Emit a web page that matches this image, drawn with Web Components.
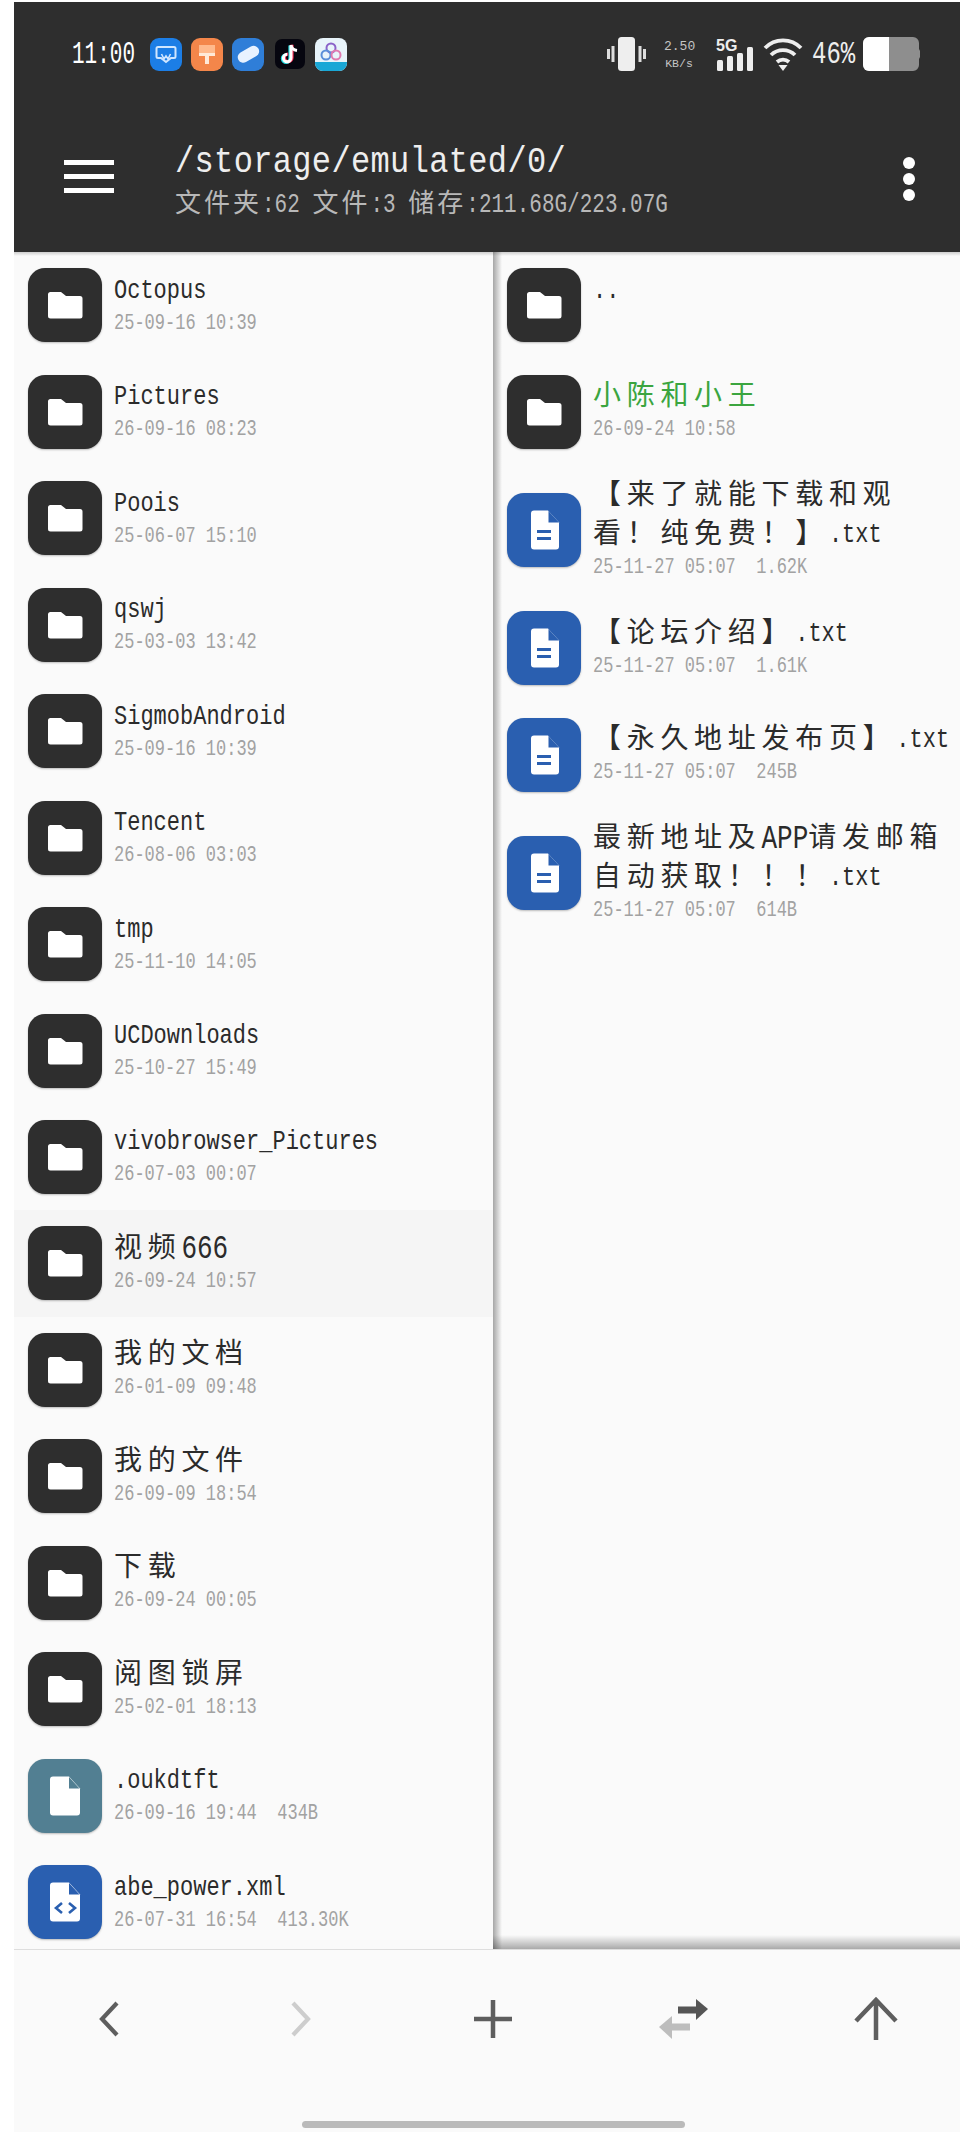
<!DOCTYPE html>
<html lang="zh">
<head>
<meta charset="utf-8">
<title>文件管理</title>
<style>
  html, body { margin: 0; padding: 0; background: #fff; }
  body { width: 960px; height: 2132px; overflow: hidden; }
</style>
</head>
<body>
<file-app></file-app>

<template id="folder-glyph">
  <svg viewBox="0 0 74 74" width="74" height="74"><path d="M20 26.5a2.5 2.5 0 0 1 2.500-2.500h10.500l5 4h14a2.500 2.500 0 0 1 2.500 2.500v17.500a2.500 2.500 0 0 1-2.500 2.500h-29.500a2.500 2.500 0 0 1-2.500-2.500z" fill="#fff"/></svg>
</template>

<script>
// Latin runs are stretched a bit (reference font is tall and narrow), CJK runs get a bigger size
function markText(text) {
  const safe = text.replace(/&/g, '&amp;').replace(/</g, '&lt;');
  const parts = safe.split(/([\u3000-\u303f\u3400-\u9fff\uff00-\uffef]+|\n)/);
  const hasCjk = parts.length > 1;
  return parts.map((part, i) => {
    if (!part) return '';
    if (part === '\n') return part;
    if (i % 2) return `<span class="cjk">${part}</span>`;
    // digits and capitals inside a CJK name come out larger in the reference
    const big = hasCjk && /^[A-Z0-9]{3,}$/.test(part);
    return `<span class="lat${big ? ' big' : ''}">${part}</span>`;
  }).join('');
}

const FILE_GLYPHS = {
  folder: document.getElementById('folder-glyph').innerHTML,
  doc: `<svg viewBox="0 0 74 74" width="74" height="74"><path d="M24 20.500a3 3 0 0 1 3-3h14l11 12v24a3 3 0 0 1-3 3h-22a3 3 0 0 1-3-3z" fill="#fff"/><path d="M41.500 18v11.500h10.500z" fill="#2a5fb0"/><path d="M30 38.500h14M30 45.500h14" stroke="#2a5fb0" stroke-width="3"/></svg>`,
  plain: `<svg viewBox="0 0 74 74" width="74" height="74"><path d="M22 20.500a3 3 0 0 1 3-3h16l11 12v24a3 3 0 0 1-3 3h-24a3 3 0 0 1-3-3z" fill="#fff"/><path d="M41 18v11.500h10.500z" fill="#527f92"/></svg>`,
  xml: `<svg viewBox="0 0 74 74" width="74" height="74"><path d="M22 20.500a3 3 0 0 1 3-3h16l11 12v24a3 3 0 0 1-3 3h-24a3 3 0 0 1-3-3z" fill="#fff"/><path d="M41 18v11.500h10.500z" fill="#2a5fb0"/><path d="M34 38l-6 5 6 5M41 38l6 5-6 5" fill="none" stroke="#2a5fb0" stroke-width="2.600"/></svg>`
};

const ICON_BG = { folder: '#2e2e2e', doc: '#2a5fb0', plain: '#527f92', xml: '#2a5fb0' };

class FileRow extends HTMLElement {
  connectedCallback() {
    const kind = this.getAttribute('kind') || 'folder';
    const name = this.getAttribute('name') || '';
    const meta = this.getAttribute('meta') || '';
    this.attachShadow({ mode: 'open' });
    this.shadowRoot.innerHTML = `
      <style>
        :host {
          display: flex;
          align-items: center;
          gap: 12px;
          box-sizing: border-box;
          min-height: 106.470px;
          padding: 13px 0 13px 14px;
        }
        :host([active]) { background: #f5f5f5; }
        .icon {
          flex: none;
          width: 74px;
          height: 74px;
          border-radius: 17px;
          box-shadow: 0 1px 2px rgba(0, 0, 0, .25);
          background: ${ICON_BG[kind]};
        }
        .icon svg { display: block; }
        .text { min-width: 0; }
        .name {
          font: 22px/39px "Liberation Mono", "Noto Sans CJK SC", monospace;
          color: #2b2b2b;
          white-space: pre;
        }
        :host([green]) .name { color: #3ba53f; }
        .meta {
          font: 17px/26px "Liberation Mono", monospace;
          min-height: 26px;
          color: #a2a2a2;
          white-space: pre;
          transform: translateY(-1px) scaleY(1.25);
        }
        .cjk {
          font-family: "Noto Sans CJK SC", sans-serif;
          font-size: 28px;
          line-height: 0;
          letter-spacing: 5.700px;
          vertical-align: -1px;
        }
        .lat {
          display: inline-block;
          transform: scaleY(1.25);
          transform-origin: 50% 64%;
        }
        .big { font-size: 26px; line-height: 0; }
      </style>
      <div class="icon">${FILE_GLYPHS[kind]}</div>
      <div class="text">
        <div class="name">${markText(name)}</div>
        <div class="meta">${meta}</div>
      </div>
    `;
  }
}
customElements.define('file-row', FileRow);

class FilePane extends HTMLElement {
  connectedCallback() {
    this.attachShadow({ mode: 'open' });
    this.shadowRoot.innerHTML = `
      <style>
        :host { display: block; min-width: 0; overflow: hidden; background: #fafafa; }
      </style>
      <slot></slot>
    `;
  }
}
customElements.define('file-pane', FilePane);

class StatusBar extends HTMLElement {
  connectedCallback() {
    this.attachShadow({ mode: 'open' });
    this.shadowRoot.innerHTML = `
      <style>
        :host {
          display: flex;
          align-items: center;
          height: 34px;
          padding: 0 40px 0 58px;
          color: #fff;
          font-family: "Liberation Mono", monospace;
        }
        .time { font-size: 21px; width: 78px; flex: none; transform-origin: 0 50%; transform: scaleY(1.5); }
        .apps { display: flex; gap: 9px; align-items: center; }
        .apps svg, .right svg { display: block; flex: none; }
        .right { margin-left: auto; display: flex; align-items: center; }
        .net {
          width: 30px;
          margin-left: 18px;
          font: 11.500px/15px "Liberation Mono", monospace;
          color: #c4c4c4;
          text-align: center;
          white-space: nowrap;
        }
        .net b { display: block; font-size: 13px; line-height: 19px; font-weight: 400; }
        .pct { font: 24px "Liberation Mono", monospace; margin: 0 8px 0 9px; width: 43px; color: #eee; transform: scaleY(1.3); }
      </style>
      <span class="time">11:00</span>
      <div class="apps">
        <svg width="32" height="33" viewBox="0 0 32 33"><rect width="32" height="33" rx="9" fill="#1c7ee6"/><path d="M8 9h16a1.500 1.500 0 0 1 1.500 1.500v8a1.500 1.500 0 0 1-1.500 1.500h-3l-5 4-5-4H8a1.500 1.500 0 0 1-1.500-1.500v-8A1.500 1.500 0 0 1 8 9z" fill="none" stroke="#cfe6ff" stroke-width="2"/><path d="M11.500 16l2.500 5 2-3 2 3 2.500-5" fill="none" stroke="#cfe6ff" stroke-width="1.600"/></svg>
        <svg width="32" height="33" viewBox="0 0 32 33"><rect width="32" height="33" rx="9" fill="#f4864a"/><path d="M8 7h16v9H8z" fill="#ffb98c"/><path d="M8 15h16v3H8zM14 18h4v8h-4z" fill="#ffe9d8"/></svg>
        <svg width="32" height="33" viewBox="0 0 32 33"><rect width="32" height="33" rx="9" fill="#2f7ed8"/><rect x="5" y="11" width="23" height="11" rx="5.500" fill="#e8f2ff" transform="rotate(-30 16 16.500)"/></svg>
        <svg width="30" height="30" viewBox="0 0 30 30" style="margin-left:2px"><rect width="30" height="30" rx="7" fill="#06060f"/><path d="M16 6v13a3.800 3.800 0 1 1-3.800-3.800" fill="none" stroke="#25e0e6" stroke-width="3.200" transform="translate(-1 .6)"/><path d="M16 6v13a3.800 3.800 0 1 1-3.800-3.800" fill="none" stroke="#fe2c55" stroke-width="3.200" transform="translate(1 -.2)"/><path d="M16 6v13a3.800 3.800 0 1 1-3.800-3.800M16 6c.5 3 2.500 5 6 5.500" fill="none" stroke="#fff" stroke-width="3"/></svg>
        <svg width="32" height="33" viewBox="0 0 32 33" style="margin-left:1px"><rect width="32" height="33" rx="8" fill="#e8f4fa"/><path d="M0 24h32v1a8 8 0 0 1-8 8H8a8 8 0 0 1-8-8z" fill="#19a7d6"/><circle cx="16" cy="10" r="4.500" fill="none" stroke="#8a62c9" stroke-width="2"/><circle cx="11" cy="17" r="4.500" fill="none" stroke="#5a8fd9" stroke-width="2"/><circle cx="21" cy="17" r="4.500" fill="none" stroke="#e07ab0" stroke-width="2"/></svg>
      </div>
      <div class="right">
        <svg width="39" height="34" viewBox="0 0 39 34"><rect x="11" y="0" width="17" height="34" rx="3.500" fill="#eee"/><path d="M1.500 12v10M6 9v16M33 9v16M37.500 12v10" stroke="#ddd" stroke-width="3"/></svg>
        <div class="net"><b>2.50</b>KB/s</div>
        <svg width="39" height="34" viewBox="0 0 39 34" style="margin-left:21px"><text x="1" y="14" font-family="Liberation Sans" font-weight="700" font-size="16" fill="#eee">5G</text><rect x="2" y="23" width="6" height="11" rx="1.500" fill="#eee"/><rect x="12" y="19" width="6" height="15" rx="1.500" fill="#eee"/><rect x="22" y="16" width="6" height="18" rx="1.500" fill="#eee"/><rect x="32" y="10" width="6" height="24" rx="1.500" fill="#eee"/></svg>
        <svg width="40" height="34" viewBox="0 0 40 34" style="margin-left:9px"><path d="M2 11a25 25 0 0 1 36 0M8 18a17 17 0 0 1 24 0M14 25a9 9 0 0 1 12 0" fill="none" stroke="#eee" stroke-width="3.800"/><path d="M15.500 28h9L20 34z" fill="#eee"/></svg>
        <span class="pct">46%</span>
        <svg width="57" height="34" viewBox="0 0 57 34"><path d="M6 0h44a6 6 0 0 1 6 6v6l1 2v6l-1 2v6a6 6 0 0 1-6 6H6a6 6 0 0 1-6-6V6a6 6 0 0 1 6-6z" fill="#8e8e8e"/><path d="M6 0h20v34H6a6 6 0 0 1-6-6V6a6 6 0 0 1 6-6z" fill="#fff"/></svg>
      </div>
    `;
  }
}
customElements.define('status-bar', StatusBar);

class TopBar extends HTMLElement {
  connectedCallback() {
    this.attachShadow({ mode: 'open' });
    this.shadowRoot.innerHTML = `
      <style>
        :host {
          display: block;
          box-sizing: border-box;
          height: 250px;
          padding-top: 35px;
          background: #2e2e2e;
          color: #fff;
        }
        .bar {
          display: flex;
          align-items: flex-start;
          margin-top: 64px;
          padding-left: 50px;
        }
        .menu { flex: none; width: 50px; margin-top: 25px; display: flex; flex-direction: column; gap: 9px; }
        .menu i { display: block; height: 5px; background: #fff; }
        .titles { flex: 1; margin-left: 61px; min-width: 0; }
        .path {
          font: 32px/44px "Liberation Mono", monospace;
          letter-spacing: .35px;
          color: #eee;
          margin-top: 6px;
          transform: scaleY(1.15);
        }
        .sub { font: 21px/30px "Liberation Mono", monospace; color: #b8b8b8; white-space: pre; margin-top: 7px; }
        .cjk { font-family: "Noto Sans CJK SC", sans-serif; font-size: 26px; line-height: 0; letter-spacing: 3px; }
        .lat { display: inline-block; transform: scaleY(1.3); transform-origin: 50% 64%; }
        .dots { flex: none; display: flex; flex-direction: column; gap: 4px; margin: 22px 45px 0 0; }
        .dots i { display: block; width: 12px; height: 12px; border-radius: 50%; background: #fff; }
      </style>
      <status-bar></status-bar>
      <div class="bar">
        <div class="menu"><i></i><i></i><i></i></div>
        <div class="titles">
          <div class="path"><slot name="path"></slot></div>
          <div class="sub">${markText(this.getAttribute('sub') || '')}</div>
        </div>
        <div class="dots"><i></i><i></i><i></i></div>
      </div>
    `;
  }
}
customElements.define('top-bar', TopBar);

class BottomBar extends HTMLElement {
  connectedCallback() {
    this.attachShadow({ mode: 'open' });
    this.shadowRoot.innerHTML = `
      <style>
        :host {
          display: block;
          box-sizing: border-box;
          height: 182px;
          background: #fafafa;
          position: relative;
        }
        .btns {
          display: grid;
          grid-template-columns: repeat(5, 191.500px);
          padding-top: 47px;
        }
        .btns div { display: flex; justify-content: center; }
        svg { display: block; }
        .home {
          position: absolute;
          left: 288px;
          bottom: 4px;
          width: 383px;
          height: 7px;
          border-radius: 4px;
          background: #bababa;
        }
      </style>
      <div class="btns">
        <div><svg width="44" height="44" viewBox="0 0 44 44"><path d="M30 6L15 22l15 16" transform="translate(-1 0)" fill="none" stroke="#5e5e5e" stroke-width="4.200"/></svg></div>
        <div><svg width="44" height="44" viewBox="0 0 44 44"><path d="M14 6l15 16-15 16" fill="none" stroke="#cdcdcd" stroke-width="4.200"/></svg></div>
        <div><svg width="44" height="44" viewBox="0 0 44 44"><path d="M22 3v38M3 22h38" stroke="#5e5e5e" stroke-width="4.500"/></svg></div>
        <div><svg width="60" height="44" viewBox="0 0 60 44"><path d="M24 13h20" stroke="#555" stroke-width="7"/><path d="M42 2l12 10-12 11z" fill="#555"/><path d="M36 30H16" stroke="#bdbdbd" stroke-width="7"/><path d="M18 19L5 30l13 12z" fill="#bdbdbd"/></svg></div>
        <div><svg width="46" height="44" viewBox="0 0 46 44"><path d="M23 43V3M3 24L23 3l20 21" fill="none" stroke="#5e5e5e" stroke-width="4.500"/></svg></div>
      </div>
      <div class="home"></div>
    `;
  }
}
customElements.define('bottom-bar', BottomBar);

class FileApp extends HTMLElement {
  connectedCallback() {
    this.attachShadow({ mode: 'open' });
    const left = [
      ['folder', 'Octopus', '25-09-16 10:39'],
      ['folder', 'Pictures', '26-09-16 08:23'],
      ['folder', 'Poois', '25-06-07 15:10'],
      ['folder', 'qswj', '25-03-03 13:42'],
      ['folder', 'SigmobAndroid', '25-09-16 10:39'],
      ['folder', 'Tencent', '26-08-06 03:03'],
      ['folder', 'tmp', '25-11-10 14:05'],
      ['folder', 'UCDownloads', '25-10-27 15:49'],
      ['folder', 'vivobrowser_Pictures', '26-07-03 00:07'],
      ['folder', '视频666', '26-09-24 10:57', 'active'],
      ['folder', '我的文档', '26-01-09 09:48'],
      ['folder', '我的文件', '26-09-09 18:54'],
      ['folder', '下载', '26-09-24 00:05'],
      ['folder', '阅图锁屏', '25-02-01 18:13'],
      ['plain', '.oukdtft', '26-09-16 19:44  434B'],
      ['xml', 'abe_power.xml', '26-07-31 16:54  413.30K']
    ];
    const right = [
      ['folder', '..', ''],
      ['folder', '小陈和小王', '26-09-24 10:58', 'green'],
      ['doc', '【来了就能下载和观\n看！纯免费！】.txt', '25-11-27 05:07  1.62K'],
      ['doc', '【论坛介绍】.txt', '25-11-27 05:07  1.61K'],
      ['doc', '【永久地址发布页】.txt', '25-11-27 05:07  245B'],
      ['doc', '最新地址及APP请发邮箱\n自动获取！！！.txt', '25-11-27 05:07  614B']
    ];
    const rows = list => list.map(([kind, name, meta, flag]) =>
      `<file-row kind="${kind}" name="${name}" meta="${meta}" ${flag || ''}></file-row>`).join('');
    this.shadowRoot.innerHTML = `
      <style>
        :host {
          display: block;
          box-sizing: border-box;
          width: 960px;
          height: 2132px;
          padding: 2px 0 0 14px;
          font-family: "Liberation Mono", monospace;
        }
        .panes {
          display: grid;
          grid-template-columns: 479px 467px;
          height: 1697px;
          border-bottom: 1px solid #dedede;
          overflow: hidden;
          position: relative;
        }
        .edge {
          position: absolute;
          left: 479px;
          top: 0;
          bottom: 0;
          width: 9px;
          background: linear-gradient(90deg, #a6a6a6, rgba(250,250,250,0));
        }
        .right-fade {
          position: absolute;
          left: 479px;
          right: 0;
          bottom: 0;
          height: 14px;
          background: linear-gradient(180deg, rgba(0,0,0,0), rgba(0,0,0,.32));
        }
        .head-shadow {
          position: absolute;
          left: 0;
          right: 0;
          top: 0;
          height: 4px;
          background: linear-gradient(180deg, rgba(0,0,0,.18), rgba(0,0,0,0));
        }
      </style>
      <top-bar sub="文件夹:62 文件:3 储存:211.68G/223.07G"><span slot="path">/storage/emulated/0/</span></top-bar>
      <div class="panes">
        <file-pane>${rows(left)}</file-pane>
        <file-pane>${rows(right)}</file-pane>
        <div class="edge"></div>
        <div class="right-fade"></div>
        <div class="head-shadow"></div>
      </div>
      <bottom-bar></bottom-bar>
    `;
  }
}
customElements.define('file-app', FileApp);
</script>
</body>
</html>
